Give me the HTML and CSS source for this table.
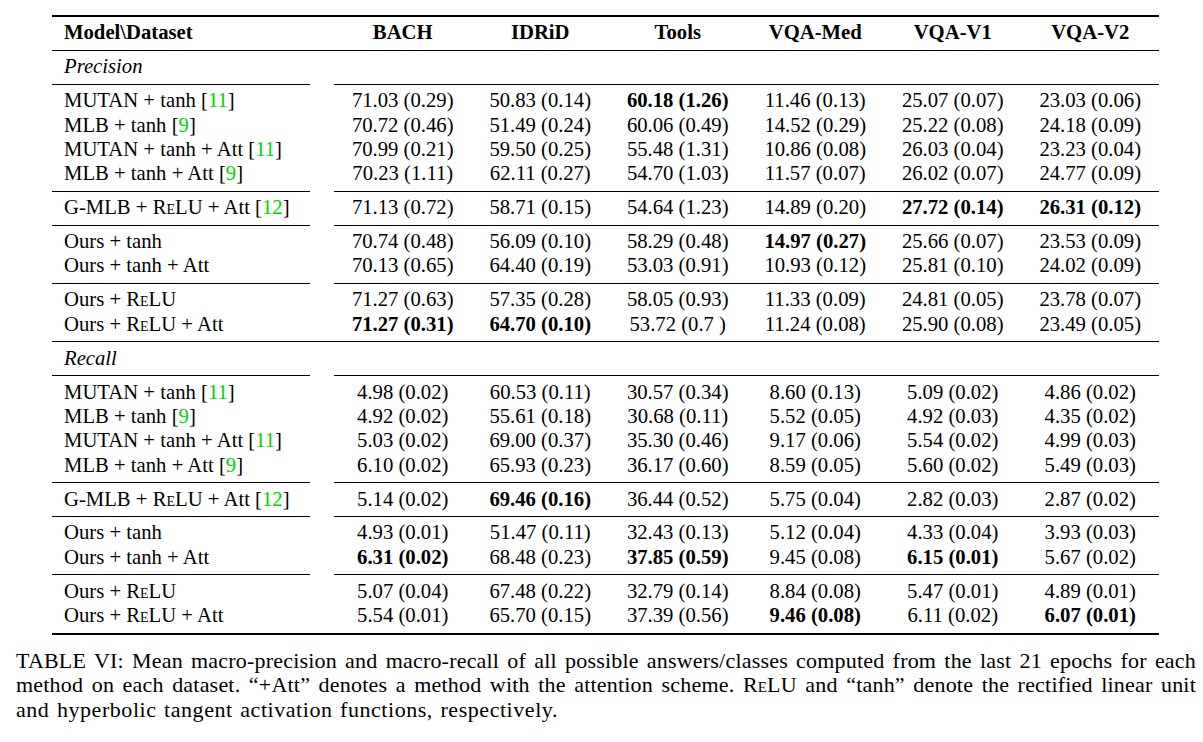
FILE: index.html
```html
<!DOCTYPE html>
<html lang="en">
<head>
<meta charset="utf-8">
<title>Table VI</title>
<link rel="stylesheet" href="styles.css">
</head>
<body>
<div class="page">
  <div class="tbl">
    <div class="rule thick"></div>
    <div class="block head">
      <div class="row">
        <span class="name">Model\Dataset</span><span>BACH</span><span>IDRiD</span><span>Tools</span><span>VQA-Med</span><span>VQA-V1</span><span>VQA-V2</span>
      </div>
    </div>
    <div class="rule"></div>
    <div class="block">
      <div class="row"><span class="name"><i>Precision</i></span></div>
    </div>
    <div class="split"><span class="seg left"></span><span class="seg right"></span></div>
    <div class="block">
      <div class="row"><span class="name">MUTAN + tanh [<span class="cite">11</span>]</span><span>71.03 (0.29)</span><span>50.83 (0.14)</span><span><b>60.18 (1.26)</b></span><span>11.46 (0.13)</span><span>25.07 (0.07)</span><span>23.03 (0.06)</span></div>
      <div class="row"><span class="name">MLB + tanh [<span class="cite">9</span>]</span><span>70.72 (0.46)</span><span>51.49 (0.24)</span><span>60.06 (0.49)</span><span>14.52 (0.29)</span><span>25.22 (0.08)</span><span>24.18 (0.09)</span></div>
      <div class="row"><span class="name">MUTAN + tanh + Att [<span class="cite">11</span>]</span><span>70.99 (0.21)</span><span>59.50 (0.25)</span><span>55.48 (1.31)</span><span>10.86 (0.08)</span><span>26.03 (0.04)</span><span>23.23 (0.04)</span></div>
      <div class="row"><span class="name">MLB + tanh + Att [<span class="cite">9</span>]</span><span>70.23 (1.11)</span><span>62.11 (0.27)</span><span>54.70 (1.03)</span><span>11.57 (0.07)</span><span>26.02 (0.07)</span><span>24.77 (0.09)</span></div>
    </div>
    <div class="split"><span class="seg left"></span><span class="seg right"></span></div>
    <div class="block">
      <div class="row"><span class="name">G-MLB + <span class="sc">ReLU</span> + Att [<span class="cite">12</span>]</span><span>71.13 (0.72)</span><span>58.71 (0.15)</span><span>54.64 (1.23)</span><span>14.89 (0.20)</span><span><b>27.72 (0.14)</b></span><span><b>26.31 (0.12)</b></span></div>
    </div>
    <div class="split"><span class="seg left"></span><span class="seg right"></span></div>
    <div class="block">
      <div class="row"><span class="name">Ours + tanh</span><span>70.74 (0.48)</span><span>56.09 (0.10)</span><span>58.29 (0.48)</span><span><b>14.97 (0.27)</b></span><span>25.66 (0.07)</span><span>23.53 (0.09)</span></div>
      <div class="row"><span class="name">Ours + tanh + Att</span><span>70.13 (0.65)</span><span>64.40 (0.19)</span><span>53.03 (0.91)</span><span>10.93 (0.12)</span><span>25.81 (0.10)</span><span>24.02 (0.09)</span></div>
    </div>
    <div class="split"><span class="seg left"></span><span class="seg right"></span></div>
    <div class="block">
      <div class="row"><span class="name">Ours + <span class="sc">ReLU</span></span><span>71.27 (0.63)</span><span>57.35 (0.28)</span><span>58.05 (0.93)</span><span>11.33 (0.09)</span><span>24.81 (0.05)</span><span>23.78 (0.07)</span></div>
      <div class="row"><span class="name">Ours + <span class="sc">ReLU</span> + Att</span><span><b>71.27 (0.31)</b></span><span><b>64.70 (0.10)</b></span><span>53.72 (0.7 )</span><span>11.24 (0.08)</span><span>25.90 (0.08)</span><span>23.49 (0.05)</span></div>
    </div>
    <div class="rule"></div>
    <div class="block">
      <div class="row"><span class="name"><i>Recall</i></span></div>
    </div>
    <div class="split"><span class="seg left"></span><span class="seg right"></span></div>
    <div class="block">
      <div class="row"><span class="name">MUTAN + tanh [<span class="cite">11</span>]</span><span>4.98 (0.02)</span><span>60.53 (0.11)</span><span>30.57 (0.34)</span><span>8.60 (0.13)</span><span>5.09 (0.02)</span><span>4.86 (0.02)</span></div>
      <div class="row"><span class="name">MLB + tanh [<span class="cite">9</span>]</span><span>4.92 (0.02)</span><span>55.61 (0.18)</span><span>30.68 (0.11)</span><span>5.52 (0.05)</span><span>4.92 (0.03)</span><span>4.35 (0.02)</span></div>
      <div class="row"><span class="name">MUTAN + tanh + Att [<span class="cite">11</span>]</span><span>5.03 (0.02)</span><span>69.00 (0.37)</span><span>35.30 (0.46)</span><span>9.17 (0.06)</span><span>5.54 (0.02)</span><span>4.99 (0.03)</span></div>
      <div class="row"><span class="name">MLB + tanh + Att [<span class="cite">9</span>]</span><span>6.10 (0.02)</span><span>65.93 (0.23)</span><span>36.17 (0.60)</span><span>8.59 (0.05)</span><span>5.60 (0.02)</span><span>5.49 (0.03)</span></div>
    </div>
    <div class="split"><span class="seg left"></span><span class="seg right"></span></div>
    <div class="block">
      <div class="row"><span class="name">G-MLB + <span class="sc">ReLU</span> + Att [<span class="cite">12</span>]</span><span>5.14 (0.02)</span><span><b>69.46 (0.16)</b></span><span>36.44 (0.52)</span><span>5.75 (0.04)</span><span>2.82 (0.03)</span><span>2.87 (0.02)</span></div>
    </div>
    <div class="split"><span class="seg left"></span><span class="seg right"></span></div>
    <div class="block">
      <div class="row"><span class="name">Ours + tanh</span><span>4.93 (0.01)</span><span>51.47 (0.11)</span><span>32.43 (0.13)</span><span>5.12 (0.04)</span><span>4.33 (0.04)</span><span>3.93 (0.03)</span></div>
      <div class="row"><span class="name">Ours + tanh + Att</span><span><b>6.31 (0.02)</b></span><span>68.48 (0.23)</span><span><b>37.85 (0.59)</b></span><span>9.45 (0.08)</span><span><b>6.15 (0.01)</b></span><span>5.67 (0.02)</span></div>
    </div>
    <div class="split"><span class="seg left"></span><span class="seg right"></span></div>
    <div class="block">
      <div class="row"><span class="name">Ours + <span class="sc">ReLU</span></span><span>5.07 (0.04)</span><span>67.48 (0.22)</span><span>32.79 (0.14)</span><span>8.84 (0.08)</span><span>5.47 (0.01)</span><span>4.89 (0.01)</span></div>
      <div class="row"><span class="name">Ours + <span class="sc">ReLU</span> + Att</span><span>5.54 (0.01)</span><span>65.70 (0.15)</span><span>37.39 (0.56)</span><span><b>9.46 (0.08)</b></span><span>6.11 (0.02)</span><span><b>6.07 (0.01)</b></span></div>
    </div>
    <div class="rule thick"></div>
  </div>
  <div class="caption">
    <div class="line just">TABLE VI: Mean macro-precision and macro-recall of all possible answers/classes computed from the last 21 epochs for each</div>
    <div class="line just">method on each dataset. “+Att” denotes a method with the attention scheme. <span class="sc">ReLU</span> and “tanh” denote the rectified linear unit</div>
    <div class="line last">and hyperbolic tangent activation functions, respectively.</div>
  </div>
</div>
</body>
</html>
```

FILE: styles.css
```css
html, body {
  margin: 0;
  padding: 0;
  background: #ffffff;
}

body {
  font-family: "Liberation Serif", "Times New Roman", serif;
  font-size: 20.7px;
  color: #000000;
}

.page {
  width: 1180px;
  padding: 15px 0 0 16px;
}

.tbl {
  width: 1107px;
  margin-left: 36px;
}

.rule {
  height: 1px;
  background: #000000;
}

.rule.thick {
  height: 2px;
}

.split {
  display: flex;
  justify-content: space-between;
  height: 1px;
}

.seg {
  display: block;
  height: 1px;
  background: #000000;
}

.seg.left {
  width: 258px;
}

.seg.right {
  width: 825px;
}

.block {
  padding: 3.4px 0 5.2px;
}

.row {
  display: grid;
  grid-template-columns: 282px repeat(6, 137.5px);
  line-height: 24.35px;
  height: 24.35px;
  white-space: nowrap;
}

.row > span {
  text-align: center;
}

.row > span.name {
  text-align: left;
  padding-left: 12px;
}

.head .row {
  font-weight: bold;
}

.cite {
  color: #00d400;
}

.sc {
  font-variant: small-caps;
}

.caption {
  margin-top: 14px;
  font-size: 22px;
  letter-spacing: 0.2px;
  line-height: 24.5px;
}

.caption .line {
  white-space: nowrap;
}

.caption .just {
  text-align: justify;
  text-align-last: justify;
  white-space: normal;
}

.caption .last {
  letter-spacing: 0.55px;
  word-spacing: 1.5px;
}
```
